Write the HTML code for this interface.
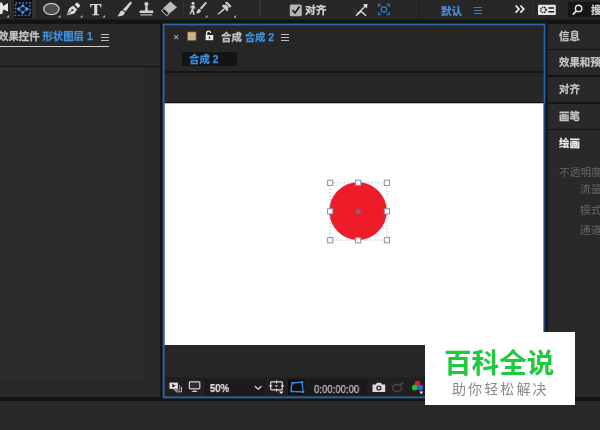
<!DOCTYPE html>
<html lang="zh">
<head>
<meta charset="utf-8">
<title>AE</title>
<style>
*{margin:0;padding:0;box-sizing:border-box}
html,body{width:600px;height:430px;overflow:hidden;background:#141414}
body{position:relative;font-family:"Liberation Sans","Noto Sans CJK SC",sans-serif;font-size:10.4px;color:#c4c4c4;line-height:1;font-weight:700}
.abs{position:absolute}
.t{position:absolute;white-space:nowrap;line-height:14px;height:14px;will-change:transform;-webkit-text-stroke:0.25px currentColor}
.blue{color:#3f8fdc}
#toolbar{left:0;top:0;width:600px;height:20px;background:linear-gradient(#272727 0,#272727 19px,#1d1d1d 19px,#1d1d1d 20px)}
#left{left:0;top:24px;width:160.2px;height:373px;background:#282828}
#leftbody{left:0;top:67px;width:144px;height:315px;background:#2b2b2b}
#comp{left:163.5px;top:23.5px;width:382px;height:374px;background:#262626}
#cin{position:absolute;left:0;top:0;width:382px;height:374px}
#cborder{position:absolute;left:-1px;top:0px;width:383px;height:375px;border:2px solid #2c69ac}
#right{left:548px;top:24px;width:52px;height:373px;background:#292929}
#bottom{left:0;top:400.5px;width:600px;height:29.5px;background:#282828}
.sep{position:absolute;left:0;width:52px;height:1.5px;background:#141414}
.t.dim{color:#5c5c5c;font-weight:500;-webkit-text-stroke:0}
.r{font-size:10.7px;-webkit-text-stroke:0.1px currentColor;color:#bcbcbc}
.ham{position:absolute;width:8px;height:7px;border-top:1px solid currentColor;border-bottom:1px solid currentColor}
.ham:after{content:"";position:absolute;left:0;top:2px;width:8px;height:1px;background:currentColor}
svg{position:absolute;overflow:visible}
</style>
</head>
<body>
<div id="toolbar" class="abs">
  <div class="abs" style="left:13.5px;top:0;width:18.5px;height:18px;background:#0e0e0e"></div>
  <div class="abs" style="left:568px;top:2px;width:32px;height:15px;background:#161616"></div>

  <div class="abs" style="left:10px;top:0;width:1px;height:18px;background:#353535"></div>
  <div class="abs" style="left:32px;top:0;width:4px;height:18px;background:#303030"></div>
  <div class="abs" style="left:183px;top:0;width:1px;height:17px;background:#333"></div>
  <div class="abs" style="left:259px;top:0;width:2px;height:17px;background:#343434"></div>
  <div class="abs" style="left:419px;top:0;width:1px;height:18px;background:#1b1b1b"></div>
  <div class="abs" style="left:532px;top:0;width:1px;height:17px;background:#333"></div>
  <svg width="600" height="20" viewBox="0 0 600 20" style="left:0;top:0">
    <!-- camera tool partial -->
    <path d="M0 2.5 L2 2.5 L3.3 6 L8 3 L8 11.5 L3.3 9.5 L2.2 14 L0 14 Z" fill="#e4e4e4"/>
    <g fill="#bdbdbd">
      <path d="M9 15 L9 17.5 L6.5 17.5 Z"/>
      <path d="M60.5 15 L60.5 17.5 L58 17.5 Z"/>
      <path d="M82.5 15 L82.5 17.5 L80 17.5 Z"/>
      <path d="M105 15 L105 17.5 L102.5 17.5 Z"/>
      <path d="M207.5 15 L207.5 17.5 L205 17.5 Z"/>
      <path d="M236 15 L236 17.5 L233.5 17.5 Z"/>
    </g>
    <!-- anchor point tool (selected) -->
    <g stroke="#3d8be0" fill="none">
      <rect x="15.5" y="2.8" width="14.5" height="12.6" stroke-width="1.7" stroke-dasharray="1.8 1.6" stroke="#2f78cc"/>
      <circle cx="22.8" cy="9.1" r="2.6" stroke-width="1.3" stroke="#2a64a8"/>
    </g>
    <g fill="#62a8f4">
      <path d="M16.5 9.1 L19.6 6.8 L19.6 11.4 Z"/>
      <path d="M29.1 9.1 L26 6.8 L26 11.4 Z"/>
      <path d="M22.8 4 L20.6 6.4 L25 6.4 Z"/>
      <path d="M22.8 14.2 L20.6 11.8 L25 11.8 Z"/>
    </g>
    <!-- ellipse -->
    <ellipse cx="51.3" cy="9" rx="7.6" ry="5.7" fill="#4e4e4e" stroke="#c9c9c9" stroke-width="1.3"/>
    <!-- pen -->
    <g>
      <path d="M66.6 15.6 L69.2 8.3 L73.2 5.6 L77.2 9.6 L74.4 13.4 Z" fill="#d6d6d6"/>
      <path d="M74.6 4.6 L77.2 2.2 L80.4 5.4 L78.2 8.2 Z" fill="#dedede"/>
      <path d="M67.4 14.8 L71.8 10.6" stroke="#2a2a2a" stroke-width="0.9"/>
      <circle cx="72.4" cy="10" r="1.1" fill="#2a2a2a"/>
    </g>
    <!-- brush -->
    <g fill="#d2d2d2">
      <path d="M130.4 1.6 L132 3 L125.6 11.4 L123 9.4 Z"/>
      <path d="M122.4 10.2 L124.8 12.2 C124.6 15 121.6 16.6 117.2 16.2 C119.6 14.6 119.4 11 122.4 10.2 Z"/>
    </g>
    <!-- stamp -->
    <g fill="#d2d2d2">
      <circle cx="146.4" cy="4" r="2.1"/>
      <path d="M145.4 5 L147.4 5 L147.8 10.4 L153 10.6 L153.4 13 L139.4 13 L139.8 10.6 L145 10.4 Z"/>
      <rect x="140.4" y="14" width="12" height="1.6" fill="#9a9a9a"/>
    </g>
    <!-- eraser -->
    <g>
      <path d="M170.3 1.6 L177 7.2 L169.6 13.6 L163.6 7.8 Z" fill="#bcbcbc"/>
      <path d="M163.8 8.4 L169.2 13.6 L166.8 15.6 L161.8 10.8 Z" fill="#141414" stroke="#e0e0e0" stroke-width="1"/>
    </g>
    <!-- roto brush -->
    <g fill="#d0d0d0">
      <circle cx="193" cy="3.2" r="1.5"/>
      <path d="M190 6.8 L192.4 5.2 L194.4 5.4 L195.6 8.4 L194.4 8.8 L193.8 7.6 L193.6 10.4 L194.8 14.6 L193.4 15 L192.2 11.4 L190.6 14.4 L189.4 13.8 L191.4 10 L191.6 7.2 L190.6 7.8 Z"/>
      <path d="M205.6 1.8 L207 3 L201.6 9.6 L199.8 8.2 Z"/>
      <path d="M199.2 8.8 L201 10.4 C200.8 12.4 198.6 13.6 195.8 13.2 C197.4 12 197 9.4 199.2 8.8 Z"/>
    </g>
    <!-- pin -->
    <g fill="#d2d2d2">
      <path d="M225 2.8 L226.8 1.4 L231.4 6 L230 7.8 Z"/>
      <path d="M225.4 4.2 L228.8 7.6 L227 9.6 L223.4 6 Z"/>
      <path d="M221.8 6 L223.4 4.6 L228.6 9.8 L227.2 11.4 Z"/>
      <path d="M223.4 8.4 L224.8 9.8 L218.2 14.8 L217.4 14 Z"/>
    </g>
    <!-- checkbox -->
    <rect x="289.8" y="4.4" width="12" height="11.8" rx="1.5" fill="#b4b4b4"/>
    <path d="M292.4 10 L295 13 L299.6 6.6" stroke="#1c1c1c" stroke-width="1.7" fill="none"/>
    <!-- snap icon 1 -->
    <g stroke="#e2e2e2" fill="none">
      <path d="M357.4 14 L365.4 6" stroke-width="1.2"/>
      <path d="M356 15.8 L361 11.2 L366 15.8" stroke-width="1.3"/>
      <path d="M353 8.6 L357 12" stroke="#666" stroke-width="1" stroke-dasharray="1 1"/>
    </g>
    <path d="M367.4 4 L367 8.4 L363 4.6 Z" fill="#f0f0f0"/>
    <!-- snap icon 2 -->
    <rect x="377.4" y="3.2" width="13" height="12.6" rx="2" fill="#13233c"/>
    <g stroke="#4f6a8e" fill="none" stroke-width="1.5">
      <path d="M378.6 7 L378.6 4.6 L381.4 4.6 M386.4 4.6 L389.2 4.6 L389.2 7 M389.2 12 L389.2 14.4 L386.4 14.4 M381.4 14.4 L378.6 14.4 L378.6 12"/>
      <circle cx="383.9" cy="9.5" r="2.7"/>
    </g>
    <!-- >> -->
    <path d="M515.6 5.5 L519 9.1 L515.6 12.7 M520.4 5.5 L523.8 9.1 L520.4 12.7" stroke="#ececec" stroke-width="1.7" fill="none"/>
    <!-- sync icon -->
    <rect x="538" y="4.8" width="17.8" height="10.2" rx="1" fill="#e6e6e6"/>
    <circle cx="543.4" cy="9.9" r="2.6" fill="none" stroke="#1c1c1c" stroke-width="1.6" stroke-dasharray="1.3 0.8"/>
    <path d="M548.4 8 L554 8 M548.4 11.8 L554 11.8" stroke="#1c1c1c" stroke-width="1.5"/>
    <!-- search -->
    <circle cx="578.6" cy="8.4" r="3.2" fill="none" stroke="#e8e8e8" stroke-width="1.4"/>
    <path d="M576.4 10.8 L572.8 14.6" stroke="#e8e8e8" stroke-width="1.7"/>
  </svg>
  <div class="t" style="left:89.6px;top:-0.2px;font-family:'Liberation Serif',serif;font-size:17.2px;line-height:20px;height:20px;color:#dadada;font-weight:700">T</div>
  <div class="t" style="left:304.5px;top:3px;font-size:10.7px;color:#d6d6d6">对齐</div>
  <div class="t" style="left:440.5px;top:4px;font-size:10.5px;color:#4a8fd8;font-weight:700">默认</div>
  <div class="ham" style="left:473.5px;top:6.5px;color:#3c7fc8"></div>
  <div class="t" style="left:591px;top:3px;font-size:10.5px;color:#d0d0d0">搜</div>
</div>
<div id="left" class="abs">
  <div class="t" style="left:-1.8px;top:6px">效果控件 <span class="blue">形状图层 1</span></div>
  <div class="ham" style="left:101px;top:10px;color:#bdbdbd"></div>
  <div class="abs" style="left:0;top:21.8px;width:108.7px;height:1.5px;background:#cfcfcf"></div>
  <div class="abs" style="left:0;top:41.5px;width:160.2px;height:1.5px;background:#141414"></div>
</div>
<div id="leftbody" class="abs"></div>
<div id="comp" class="abs"><div id="cin">
  <div class="t" style="left:57.5px;top:7.2px">合成 <span class="blue">合成 2</span></div>
  <div class="ham" style="left:117px;top:10.7px;color:#bdbdbd"></div>
  <svg width="60" height="20" viewBox="0 0 60 20" style="left:0.8px;top:0.5px">
    <path d="M10.2 11.2 L14.2 15.2 M14.2 11.2 L10.2 15.2" stroke="#a8a8a8" stroke-width="1.1"/>
    <rect x="23.2" y="7.8" width="9" height="9" fill="#cab58d" stroke="#46402f" stroke-width="0.8"/>
    <rect x="41.6" y="11" width="7.6" height="5.2" fill="#ececec"/>
    <path d="M42.6 11.2 L42.6 9.2 C42.6 6.4 46.6 6.4 46.6 9" stroke="#ececec" stroke-width="1.3" fill="none"/>
    <rect x="44.8" y="12.6" width="1.4" height="2.2" fill="#222"/>
  </svg>
  <div class="abs" style="left:18px;top:28.5px;width:55.5px;height:14px;background:#141414"></div>
  <div class="t blue" style="left:25.5px;top:29.9px">合成 2</div>
  <div class="abs" style="left:1.5px;top:47.6px;width:379px;height:1.5px;background:#141414"></div>
  <div class="abs" style="left:1.5px;top:49px;width:379px;height:31px;background:#272727"></div><div class="abs" style="left:0.5px;top:78.5px;width:380px;height:1px;background:#121212"></div>
  
  <svg width="600" height="430" viewBox="0 0 600 430" style="left:-163.5px;top:-23.5px">
    <rect x="164.4" y="103.3" width="379.4" height="241.9" fill="#fff"/>
    <circle cx="358" cy="211.1" r="28.5" fill="#ee1c28" stroke="#d41424" stroke-width="0.6"/>
    <rect x="330.2" y="182.8" width="56.7" height="57.4" fill="none" stroke="#a9a4d8" stroke-width="0.9" stroke-dasharray="1.2 2.2"/>
    <g><rect x="327.6" y="180.2" width="5.2" height="5.2" fill="#fff" stroke="#8b8fa0" stroke-width="1"/><rect x="327.6" y="208.8" width="5.2" height="5.2" fill="#fff" stroke="#8b8fa0" stroke-width="1"/><rect x="327.6" y="237.6" width="5.2" height="5.2" fill="#fff" stroke="#8b8fa0" stroke-width="1"/><rect x="355.6" y="180.2" width="5.2" height="5.2" fill="#fff" stroke="#8b8fa0" stroke-width="1"/><rect x="355.6" y="237.6" width="5.2" height="5.2" fill="#fff" stroke="#8b8fa0" stroke-width="1"/><rect x="384.3" y="180.2" width="5.2" height="5.2" fill="#fff" stroke="#8b8fa0" stroke-width="1"/><rect x="384.3" y="208.8" width="5.2" height="5.2" fill="#fff" stroke="#8b8fa0" stroke-width="1"/><rect x="384.3" y="237.6" width="5.2" height="5.2" fill="#fff" stroke="#8b8fa0" stroke-width="1"/></g>
    <circle cx="358.4" cy="211.4" r="2.3" fill="#d8485a" stroke="#8c5a78" stroke-width="0.9"/>
    <path d="M354.5 211.4 h7.8 M358.4 207.5 v7.8" stroke="#b04a66" stroke-width="0.6"/>
  </svg>
  <div class="abs" style="left:1.5px;top:321.5px;width:379px;height:32.5px;background:#272727"></div>
  <div class="abs" style="left:1.5px;top:353.6px;width:379px;height:19.5px;background:#202020"></div>
  <div class="abs" style="left:41.0px;top:355.0px;width:60.5px;height:17.5px;background:#1b1b1b"></div>
  <div class="abs" style="left:124.5px;top:355.5px;width:17px;height:16px;background:#0f0f0f"></div>
  <div class="abs" style="left:142.5px;top:355.2px;width:60.7px;height:16.6px;background:#1a1a1a"></div>
  <div class="t" style="left:46.5px;top:357.5px;font-size:11px;color:#dcdcdc;transform:scaleX(0.87);transform-origin:0 0">50%</div>
  <div class="t" style="left:150.7px;top:358.1px;font-size:11px;color:#c4c4c4;font-weight:400;transform:scaleX(0.87);transform-origin:0 0">0:00:00:00</div>
  <svg width="382" height="30" viewBox="163.5 370 382 30" style="left:0;top:346.5px">
    <!-- always preview -->
    <g>
      <path d="M173.5 386.5 L173.5 390 L179.2 390 L179.2 385" fill="none" stroke="#9a9a9a" stroke-width="1"/>
      <path d="M175.5 388.5 L175.5 391.8 L181 391.8 L181 387" fill="none" stroke="#bdbdbd" stroke-width="1"/>
      <rect x="169" y="382.6" width="8.4" height="6.2" fill="#e2e2e2"/>
      <path d="M171.8 383.8 L175.2 385.7 L171.8 387.6 Z" fill="#1c1c1c"/>
    </g>
    <!-- monitor -->
    <g>
      <rect x="188.9" y="381.9" width="10.4" height="7" rx="0.8" fill="#2e2e2e" stroke="#d2d2d2" stroke-width="1.2"/>
      <path d="M191 392 C192.4 390 195.8 390 197.2 392 Z" fill="#d2d2d2"/>
    </g>
    <!-- chevron -->
    <path d="M254.4 386.2 L257.7 389.2 L261 386.2" fill="none" stroke="#e0e0e0" stroke-width="1.2"/>
    <!-- region of interest -->
    <g stroke="#dadada" fill="none">
      <rect x="270.2" y="381.9" width="11.6" height="8" rx="0.8" stroke-width="1.2"/>
      <path d="M276 380.5 v3 M276 388.4 v3 M268.8 385.9 h3 M280.4 385.9 h3 M274.8 385.9 h2.4" stroke-width="1.1"/>
    </g>
    <path d="M278.4 391.4 L283 391.4 L280.7 394 Z" fill="#f0f0f0"/>
    <!-- mask toggle -->
    <g>
      <path d="M292 383 L301.6 382.2 L302.6 392 L291 391.4 L290.6 387.4 Z" fill="none" stroke="#3d8be0" stroke-width="1.3"/>
      <g fill="#3d8be0">
        <rect x="291" y="382" width="2.2" height="2.2"/><rect x="300.6" y="381.2" width="2.2" height="2.2"/>
        <rect x="301.6" y="390.8" width="2.2" height="2.2"/><rect x="289.9" y="390.2" width="2.2" height="2.2"/>
      </g>
    </g>
    <!-- camera -->
    <g>
      <path d="M372 384.4 L375.4 384.4 L376.4 382.8 L380.4 382.8 L381.4 384.4 L384.7 384.4 L384.7 392 L372 392 Z" fill="#dcdcdc"/>
      <circle cx="378.4" cy="388" r="2.6" fill="#2a2a2a"/>
      <circle cx="378.4" cy="388" r="1.2" fill="#dcdcdc"/>
    </g>
    <!-- dim show-snapshot -->
    <g stroke="#484848" fill="none" stroke-width="1.5">
      <ellipse cx="396.6" cy="388" rx="4.6" ry="3.4"/>
      <path d="M398 386 L403 382.4"/>
    </g>
    <!-- RGB -->
    <circle cx="417" cy="383.6" r="2.9" fill="#e02020"/>
    <circle cx="414.3" cy="387.6" r="2.9" fill="#20c030"/>
    <circle cx="419.7" cy="387.6" r="2.9" fill="#3060e0"/>
    <path d="M418.8 391.6 L422.8 391.6 L420.8 394.2 Z" fill="#f0f0f0"/>
  </svg>
</div></div>
<svg width="600" height="430" viewBox="0 0 600 430" style="left:0;top:0;pointer-events:none"><rect x="163.6" y="24.45" width="381" height="372.95" fill="none" stroke="#2b66a6" stroke-width="1.8"/><path d="M544.6 103.3 V345.2" stroke="#1c3f6c" stroke-width="1.8"/><rect x="545.5" y="25" width="2.5" height="372" fill="#0d1828"/></svg>
<div id="right" class="abs">
  <div class="sep" style="top:24.5px"></div>
  <div class="sep" style="top:51px"></div>
  <div class="sep" style="top:78px"></div>
  <div class="sep" style="top:104.5px"></div>
  <div class="t rNone" style="left:11px;top:5.5px">信息</div>
  <div class="t rNone" style="left:11px;top:32px">效果和预</div>
  <div class="t rNone" style="left:11px;top:58.5px">对齐</div>
  <div class="t rNone" style="left:11px;top:85.5px">画笔</div>
  <div class="t rNone" style="left:11px;top:112.5px;color:#ececec;font-weight:700">绘画</div>
  <div class="t r dim" style="left:10.5px;top:140.7px">不透明度</div>
  <div class="t r dim" style="left:31.5px;top:158.1px">流量</div>
  <div class="t r dim" style="left:31.5px;top:178.5px">模式</div>
  <div class="t r dim" style="left:31.5px;top:198.8px">通道</div>
</div>
<div id="bottom" class="abs"></div>
<div class="abs" style="left:425px;top:332px;width:150.3px;height:73px;background:#fff">
  <div class="t" style="left:18.5px;top:15.8px;font-size:27.6px;line-height:32px;height:32px;font-weight:bold;color:#20ca3e;-webkit-text-stroke:0">百科全说</div>
  <div class="t" style="left:27.3px;top:48px;font-size:14px;line-height:18px;height:18px;color:#8a8a8a;letter-spacing:2.1px;font-weight:400;-webkit-text-stroke:0">助你轻松解决</div>
</div>
</body>
</html>
